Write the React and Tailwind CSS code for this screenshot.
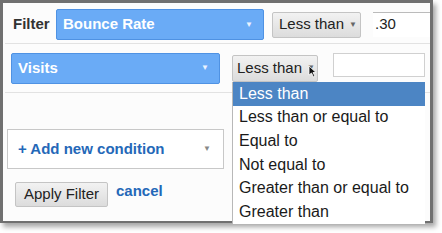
import { Fragment } from 'react'

const options = [
  'Less than',
  'Less than or equal to',
  'Equal to',
  'Not equal to',
  'Greater than or equal to',
  'Greater than',
]

function BlueSelect({ label, className }) {
  return (
    <div
      className={`flex items-center justify-between rounded-[2px] border border-[#4f92e3] bg-[#6aabf6] pl-[6px] pr-[10px] text-[15px] font-bold text-white ${className}`}
    >
      <span>{label}</span>
      <span className="text-[8px] text-[#eaf3ff]">▼</span>
    </div>
  )
}

function GrayButton({ children, className }) {
  return (
    <div
      className={`flex items-center rounded-[2px] border border-[#c4c4c4] bg-gradient-to-b from-[#f2f2f2] to-[#dcdcdc] text-[15px] text-[#222] ${className}`}
    >
      {children}
    </div>
  )
}

export default function App() {
  return (
    <div className="relative h-[233px] w-[442px] overflow-hidden bg-white font-['Liberation_Sans',Arial,sans-serif]">
      <div className="relative h-[223px] w-[433px] border-b-2 border-l-[3px] border-r-[3px] border-t-[3px] border-[#707070] bg-[#fcfcfc] shadow-[3px_4px_5px_rgba(0,0,0,0.35)]">
        {/* row 1 */}
        <div className="flex items-center pl-[10px] pt-[6px]">
          <span className="w-[43px] text-[15px] font-bold text-[#333]">Filter</span>
          <BlueSelect label="Bounce Rate" className="h-[31px] w-[208px]" />
          <GrayButton className="ml-[8px] h-[26px] w-[89px] pl-[6px]">
            Less than <span className="ml-[5px] text-[8px] text-[#666]">▼</span>
          </GrayButton>
          <div className="ml-[12px] h-[25px] flex-1 border-t border-[#bbb] bg-white pl-[2px] text-[15px] text-[#222]">.30</div>
        </div>

        {/* row 2 */}
        <div className="ml-[2px] mt-[3px] flex h-[50px] items-center border-b border-t border-[#e2e2e2] pl-[6px]">
          <BlueSelect label="Visits" className="h-[31px] w-[209px]" />
          <GrayButton className="ml-[12px] h-[27px] w-[86px] pl-[4px]">
            Less than <span className="ml-[5px] text-[8px] text-[#666]">▼</span>
          </GrayButton>
          <div className="mb-[6px] ml-[15px] h-[24px] w-[92px] border border-[#d0d0d0] bg-white" />
        </div>

        {/* add condition */}
        <div className="ml-[4px] mt-[36px] flex h-[40px] w-[217px] items-center justify-between border border-[#c8c8c8] bg-white pl-[10px] pr-[12px]">
          <span className="text-[15px] font-bold text-[#2468b8]">+ Add new condition</span>
          <span className="text-[8px] text-[#888]">▼</span>
        </div>

        <div className="ml-[12px] mt-[13px] flex items-center">
          <GrayButton className="h-[25px] w-[93px] justify-center">Apply Filter</GrayButton>
          <span className="ml-[8px] mt-[-6px] text-[15px] font-bold text-[#2468b8]">cancel</span>
        </div>

        {/* open menu */}
        <div className="absolute left-[229px] top-[79px] w-[193px] border-l border-[#b8b8b8] bg-white">
          {options.map((o, i) => (
            <Fragment key={o}>
              <div
                className={`flex h-[23.6px] items-center pl-[6px] text-[16px] ${
                  i === 0 ? 'bg-[#4c85c4] text-white' : 'text-[#1a1a1a]'
                }`}
              >
                {o}
              </div>
            </Fragment>
          ))}
        </div>

        {/* cursor */}
        <svg className="absolute left-[305px] top-[62px]" width="9" height="13" viewBox="0 0 9 13">
          <path d="M1 1 L1 10 L3.5 8 L5.5 12 L7 11.3 L5 7.5 L8 7.5 Z" fill="#111" stroke="#fff" strokeWidth="0.8" />
        </svg>
      </div>
    </div>
  )
}
